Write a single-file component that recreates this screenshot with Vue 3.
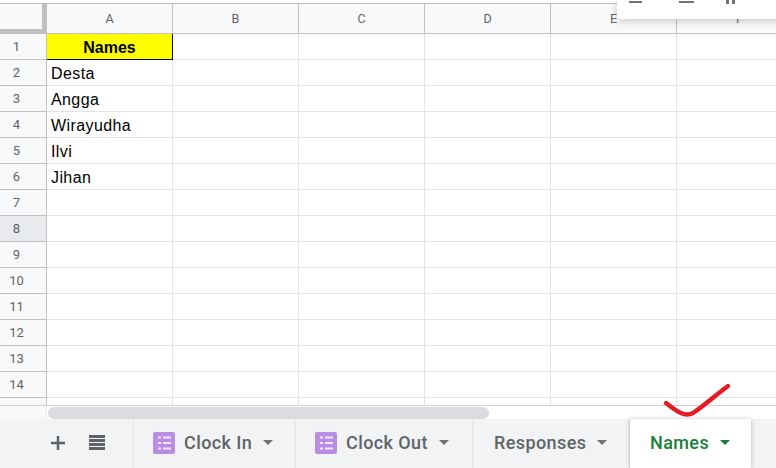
<template>
  <div class="sheet-app">
    <div class="grid-area">
      <div class="head-row">
        <div class="corner"></div>
        <div v-for="col in columns" :key="col" class="col-head">{{ col }}</div>
      </div>
      <div v-for="row in rows" :key="row" class="row" :class="{ first: row === 1 }">
        <div class="row-head" :class="{ active: row === 8 }">{{ row }}</div>
        <div class="cell name-cell" :class="{ title: row === 1 }">{{ names[row - 1] }}</div>
        <div v-for="col in columns.slice(1)" :key="col" class="cell"></div>
      </div>
      <div class="row partial">
        <div class="row-head"></div>
        <div v-for="col in columns" :key="col" class="cell"></div>
      </div>
    </div>

    <div class="scroll-row">
      <div class="scroll-gutter"></div>
      <div class="scroll-track"><div class="scroll-thumb"></div></div>
    </div>

    <div class="tab-bar">
      <div class="tab-tools">
        <svg class="tool-icon" width="14" height="14" viewBox="0 0 14 14"><path d="M5.750 0h2.500v5.750H14v2.500H8.250V14h-2.500V8.250H0v-2.500h5.750z" fill="#5f6368" /></svg>
        <svg class="tool-icon" width="16" height="15" viewBox="0 0 16 15"><path d="M0 0h16v3H0zM0 4h16v3H0zM0 8h16v3H0zM0 12h16v3H0z" fill="#5f6368" /></svg>
      </div>
      <div v-for="tab in tabs" :key="tab.name" class="tab" :class="[tab.cls, { active: tab.active }]">
        <svg v-if="tab.form" class="form-icon" width="22" height="22" viewBox="0 0 22 22">
          <rect width="22" height="22" rx="2" fill="#b98de3" />
          <path d="M5 4.500h3v2H5zM10 4.500h8v2h-8zM5 10h3v2H5zM10 10h8v2h-8zM5 15.500h3v2H5zM10 15.500h8v2h-8z" fill="#f1e8fa" />
        </svg>
        <span class="tab-name">{{ tab.name }}</span>
        <span class="caret"></span>
      </div>
    </div>

    <div class="float-bar">
      <span class="dash d1"></span>
      <span class="dash d2"></span>
      <span class="ticks"></span>
    </div>

    <svg class="check" width="776" height="468" viewBox="0 0 776 468">
      <path d="M666 403C671 407 676 411 681 413C685 415 689 415 693 413C704 406 717 394 728 386" fill="none" stroke="#e31b23" stroke-width="4.400" stroke-linecap="round" stroke-linejoin="round" />
    </svg>
  </div>
</template>

<script setup>
const columns = ['A', 'B', 'C', 'D', 'E', 'F']
const rows = Array.from({ length: 14 }, (_, i) => i + 1)
const names = ['Names', 'Desta', 'Angga', 'Wirayudha', 'Ilvi', 'Jihan']
const tabs = [
  { name: 'Clock In', form: true, cls: 'tab-in' },
  { name: 'Clock Out', form: true, cls: 'tab-out' },
  { name: 'Responses', cls: 'tab-resp' },
  { name: 'Names', active: true, cls: 'tab-names' },
]
</script>

<style scoped>
.sheet-app {
  position: relative;
  width: 776px; height: 468px;
  background: #fff;
  overflow: hidden;
  font-family: 'Liberation Sans', Arial, sans-serif;
  display: flex; flex-direction: column;
}

/* Grid */
.grid-area { padding-top: 3px; height: 406px; box-sizing: border-box; overflow: hidden; border-bottom: 1px solid #d0d0d0; }
.head-row {
  display: flex; height: 31px; box-sizing: border-box;
  border-top: 1px solid #c0c0c0; border-bottom: 1px solid #c0c0c0;
  background: #f8f9fa;
}
.corner {
  width: 47px; box-sizing: border-box; flex-shrink: 0;
  border-right: 1px solid #c0c0c0;
  background: #f8f9fa;
  position: relative;
}
.corner::after {
  content: ''; position: absolute; left: 0; right: 0; bottom: 0; height: 4px;
  background: #c0c0c0;
}
.corner::before {
  content: ''; position: absolute; right: 0; top: 0; bottom: 0; width: 4px;
  background: #c0c0c0;
}
.col-head {
  width: 126px; box-sizing: border-box; flex-shrink: 0;
  border-right: 1px solid #c0c0c0;
  font-family: 'Roboto', sans-serif;
  font-size: 12.500px; color: #5f6368;
  display: flex; align-items: center; justify-content: center;
}
.row { display: flex; height: 26px; box-sizing: border-box; }
.row.partial { height: 8px; }
.row-head {
  width: 47px; flex-shrink: 0; box-sizing: border-box;
  background: #f8f9fa;
  border-right: 1px solid #c0c0c0; border-bottom: 1px solid #c0c0c0;
  font-family: 'Roboto', sans-serif;
  font-size: 13px; color: #5f6368;
  display: flex; align-items: center; justify-content: center;
  padding-right: 13px;
}
.row-head.active { background: #e8eaed; }
.cell {
  width: 126px; flex-shrink: 0; box-sizing: border-box;
  border-right: 1px solid #e2e3e3; border-bottom: 1px solid #e2e3e3;
}
.name-cell {
  font-size: 16px; letter-spacing: 0.4px; color: #000;
  padding: 0 4px; line-height: 27px;
}
.name-cell.title {
  background: #ff0;
  letter-spacing: 0;
  font-weight: 700; text-align: center;
  border-right: 1px solid #000; border-bottom: 1px solid #000;
}

/* Scrollbar */
.scroll-row { display: flex; height: 13px; flex-shrink: 0; }
.scroll-gutter { width: 47px; background: #f8f9fa; border-right: 1px solid #e8eaed; box-sizing: border-box; }
.scroll-track { flex: 1; padding: 1px 0 0 1px; background: #fff; }
.scroll-thumb { width: 441px; height: 12px; background: #dadce0; border-radius: 6px; }

/* Tabs */
.tab-bar {
  flex: 1; display: flex;
  background: #f1f3f4;
  font-family: 'Roboto', sans-serif;
}
.tab-tools {
  width: 134px; flex-shrink: 0; box-sizing: border-box;
  display: flex; align-items: center; gap: 24px;
  padding: 0 0 2px 51px;
  border-right: 1px solid #e3e5e7;
}
.tool-icon { display: block; }
.tab {
  display: flex; align-items: center;
  box-sizing: border-box; flex-shrink: 0;
  padding-bottom: 2px;
  border-right: 1px solid #e3e5e7;
  font-size: 18px; font-weight: 500; color: #5f6368; letter-spacing: 0.4px;
}
.tab-in { width: 162px; padding-left: 19px; }
.tab-out { width: 177px; padding-left: 19px; }
.tab-resp { width: 157px; padding-left: 21px; }
.tab-names {
  width: 121px; padding-left: 20px;
  background: #fff; color: #188038;
  box-shadow: 0 0 4px rgba(60, 64, 67, 0.35);
  border-right: none;
  position: relative;
}
.form-icon { margin-right: 9px; flex-shrink: 0; }
.caret {
  width: 0; height: 0; margin-left: 11px;
  border-left: 5px solid transparent; border-right: 5px solid transparent;
  border-top: 5px solid #6e7276;
}
.tab-names .caret { border-top-color: #188038; }

/* Floating toolbar */
.float-bar {
  position: absolute; left: 617px; top: 0;
  width: 170px; height: 19px;
  background: #fff;
  border-radius: 0 0 0 3px;
  box-shadow: 0 2px 8px rgba(60, 64, 67, 0.28);
}
.dash { position: absolute; top: 1px; height: 2px; background: #6f7276; }
.d1 { left: 12px; width: 13px; }
.d2 { left: 62px; width: 15px; }
.ticks {
  position: absolute; left: 109px; top: 0;
  width: 3px; height: 4px;
  border-left: 3px solid #6f7276; border-right: 3px solid #6f7276;
}

/* Hand drawn mark */
.check { position: absolute; left: 0; top: 0; pointer-events: none; }
</style>
